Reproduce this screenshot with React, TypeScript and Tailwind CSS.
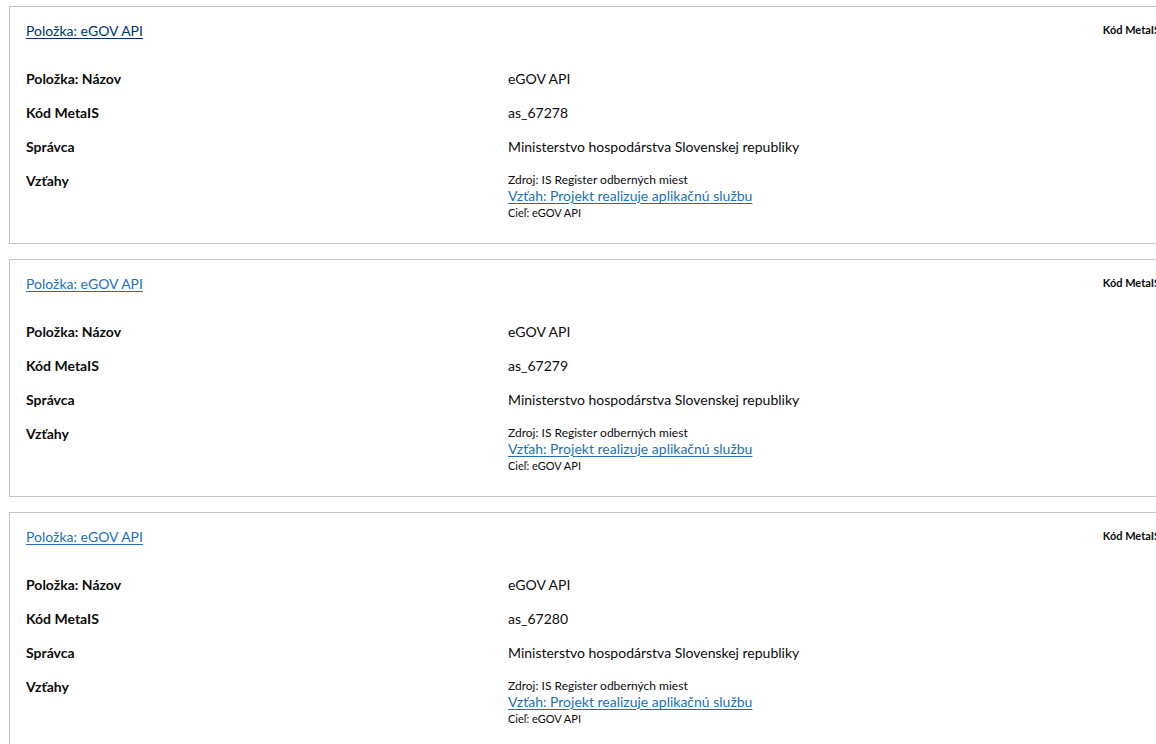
import React from 'react';

interface Item {
  code: string;
}

const items: Item[] = [{ code: 'as_67278' }, { code: 'as_67279' }, { code: 'as_67280' }];

function Row({ label, children }: { label: string; children: React.ReactNode }) {
  return (
    <div className="grid grid-cols-[482px_1fr] items-start">
      <div className="text-[14px] font-bold leading-[20px]">{label}</div>
      <div className="text-[14px] leading-[20px]">{children}</div>
    </div>
  );
}

function ItemCard({ item, visited }: { item: Item; visited?: boolean }) {
  return (
    <div className="w-[1253px] border border-[#c4c4c4] bg-white px-4 pt-[14px] pb-[23px]">
      <div className="flex items-start justify-between">
        <a
          href="#"
          className={`text-[14px] leading-[20px] underline underline-offset-2 ${visited ? 'text-[#003078]' : 'text-[#1d70b8]'}`}
        >
          Položka: eGOV API
        </a>
        <div className="mr-[32px] pt-[2px] text-[11px] font-bold leading-[14px]">
          Kód MetaIS: {item.code}
        </div>
      </div>

      <div className="mt-[28px] flex flex-col gap-[14px]">
        <Row label="Položka: Názov">eGOV API</Row>
        <Row label="Kód MetaIS">{item.code}</Row>
        <Row label="Správca">Ministerstvo hospodárstva Slovenskej republiky</Row>
        <Row label="Vzťahy">
          <div className="flex flex-col pt-[2px]">
            <span className="text-[12px] leading-[14px]">Zdroj: IS Register odberných miest</span>
            <a href="#" className="text-[14px] leading-[18px] text-[#1d70b8] underline underline-offset-2">
              Vzťah: Projekt realizuje aplikačnú službu
            </a>
            <span className="text-[11px] leading-[15px]">Cieľ: eGOV API</span>
          </div>
        </Row>
      </div>
    </div>
  );
}

export default function App() {
  return (
    <div
      className="h-[744px] w-[1156px] overflow-hidden bg-white text-[#0b0c0c]"
      style={{ fontFamily: 'Lato, "Noto Sans", sans-serif' }}
    >
      <div className="flex flex-col gap-[15px] pl-[9px] pt-[6px]">
        {items.map((item, i) => (
          <ItemCard key={item.code} item={item} visited={i === 0} />
        ))}
      </div>
    </div>
  );
}
